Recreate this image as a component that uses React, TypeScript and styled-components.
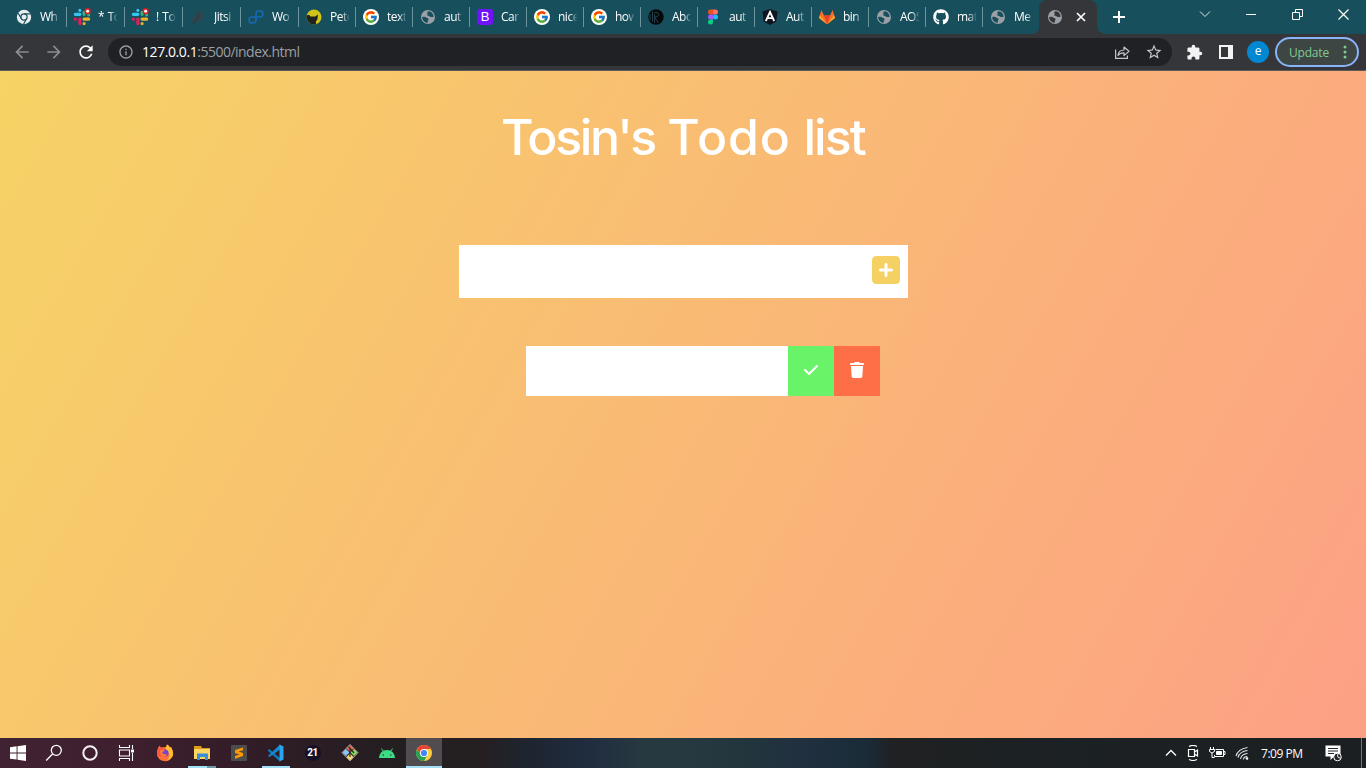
import React from "react";
import styled, { createGlobalStyle } from "styled-components";
import { FaCheck, FaSquarePlus, FaTrash } from "react-icons/fa6";
import { FaGithub } from "react-icons/fa";
import { FcGoogle } from "react-icons/fc";
import { MdExtension, MdRefresh, MdStarBorder, MdArrowBack, MdArrowForward, MdInfoOutline } from "react-icons/md";

const ui = `"Open Sans", "Noto Sans", sans-serif`;

const GlobalStyle = createGlobalStyle`
  * { box-sizing: border-box; }
  body { margin: 0; overflow: hidden; font-family: ${ui}; }
  svg { display: block; flex: none; }
  button { border: 0; padding: 0; margin: 0; font: inherit; }
`;

const Screen = styled.div`
  width: 1366px;
  height: 768px;
  display: flex;
  flex-direction: column;
`;

/* ---------- browser chrome ---------- */

const TabStrip = styled.div`
  height: 34px;
  flex: none;
  display: flex;
  padding-left: 9px;
  background: #184f5d;
`;

const Tab = styled.div<{ $wide?: boolean }>`
  width: ${(p) => (p.$wide ? 58 : 57)}px;
  height: 34px;
  padding-left: 7px;
  display: flex;
  align-items: center;
  flex: none;
  gap: 8px;
`;

const TabTitle = styled.span`
  width: 19px;
  margin-right: -8px;
  height: 18px;
  overflow: hidden;
  white-space: nowrap;
  color: #fff;
  font-size: 12px;
  line-height: 18px;
  letter-spacing: -0.5px;
  word-spacing: 1px;
  mask-image: linear-gradient(90deg, #000 60%, rgba(0, 0, 0, 0.1));
`;

const Separator = styled.i<{ $hidden?: boolean }>`
  width: 1px;
  height: 20px;
  margin-left: auto;
  background: ${(p) => (p.$hidden ? "transparent" : "#6d939c")};
`;

const ActiveTab = styled.div`
  width: 58px;
  margin-left: -1px;
  height: 34px;
  padding: 0 11px 0 8px;
  display: flex;
  flex: none;
  align-items: center;
  justify-content: space-between;
  background: #35363a;
  border-radius: 8px 8px 0 0;
`;

const Flare = styled.i<{ $side: "left" | "right" }>`
  width: 8px;
  height: 8px;
  flex: none;
  align-self: flex-end;
  margin-left: ${(p) => (p.$side === "left" ? -8 : 0)}px;
  background: radial-gradient(circle at ${(p) => (p.$side === "left" ? "0 0" : "100% 0")}, transparent 7.5px, #35363a 8px);
`;

const NewTab = styled.div`
  padding: 10px 0 0 7px;
`;

const WindowControls = styled.div`
  margin-left: auto;
  display: flex;
  height: 28px;
  align-items: center;
`;

const WindowButton = styled.div`
  width: 46px;
  display: flex;
  justify-content: center;
`;

const Toolbar = styled.div`
  height: 37px;
  flex: none;
  display: flex;
  align-items: center;
  background: #35363a;
  border-bottom: 1px solid #5b5a59;
`;

const NavButtons = styled.div`
  display: flex;
  width: 108px;
  padding-left: 12px;
  gap: 12px;
  color: #8b8c8f;
`;

const AddressBar = styled.div`
  width: 1064px;
  height: 28px;
  display: flex;
  align-items: center;
  padding: 0 9px 0 10px;
  border-radius: 14px;
  background: #202124;
  color: #9aa0a6;
`;

const Url = styled.div`
  margin-left: 8px;
  font-size: 14px;
  line-height: 20px;
  letter-spacing: -0.52px;
  flex: 1;
  b { color: #fff; font-weight: 400; letter-spacing: -0.42px; }
`;

const AddressActions = styled.div`
  display: flex;
  align-items: center;
  gap: 15px;
  color: #c4c6c9;
`;

const Extensions = styled.div`
  display: flex;
  align-items: center;
  padding-left: 14px;
  color: #f1f3f4;
`;

const PanelIcon = styled.i`
  width: 14px;
  height: 14px;
  margin-left: 16px;
  border: 2px solid #f1f3f4;
  border-right-width: 5px;
`;

const Avatar = styled.div`
  width: 22px;
  height: 22px;
  margin-left: 14px;
  border-radius: 50%;
  background: #0288d1;
  color: #fff;
  font-size: 12px;
  font-weight: 500;
  line-height: 20px;
  text-align: center;
`;

const UpdateButton = styled.button`
  width: 84px;
  height: 30px;
  margin-left: 6px;
  padding: 0 10px 0 12px;
  display: flex;
  align-items: center;
  justify-content: space-between;
  border: 2px solid #8ab4f8;
  border-radius: 15px;
  background: #3d4643;
  color: #81c995;
  font-size: 12px;
  letter-spacing: -0.2px;
`;

/* ---------- page ---------- */

const Page = styled.main`
  flex: 1;
  display: flex;
  flex-direction: column;
  align-items: center;
  background: linear-gradient(120deg, #f6d365 0%, #fda085 100%);
`;

const Title = styled.h1`
  margin: 30px 0 0;
  height: 72px;
  font-family: Inter, sans-serif;
  font-size: 50px;
  font-weight: 500;
  line-height: 72px;
  letter-spacing: -0.9px;
  white-space: nowrap;
  color: #fff;
`;

const Word = styled.span<{ $spacing: number }>`
  letter-spacing: ${(p) => p.$spacing}px;
`;

const TodoForm = styled.div`
  width: 449px;
  height: 53px;
  margin: 72px 0 0 1px;
  padding: 9px 6.5px 0 0;
  display: flex;
  justify-content: flex-end;
  background: #fff;
  color: #f5d063;
`;

const TodoItem = styled.div`
  display: flex;
  width: 354px;
  height: 50px;
  margin: 48px 0 0 40px;
  background: #fff;
`;

const TodoText = styled.div`
  flex: 1;
`;

const TodoAction = styled.button<{ $color: string }>`
  width: 46px;
  height: 50px;
  display: flex;
  align-items: center;
  justify-content: center;
  padding-bottom: 2px;
  color: #fff;
  background: ${(p) => p.$color};
`;

/* ---------- taskbar ---------- */

const Taskbar = styled.footer`
  height: 30px;
  flex: none;
  display: flex;
  color: #fff;
  background: linear-gradient(90deg, #412233 0, #3d1f2e 140px, #301c26 260px, #231f20 400px, #251f22 480px, #1e2530 530px, #202d40 590px, #263840 640px, #263940 690px, #22353d 750px, #203040 800px, #1a2b38 865px, #202122 895px, #1c2123 1000px, #1b1f21 1366px);
`;

const TaskSlot = styled.div<{ $w?: number; $active?: boolean }>`
  width: ${(p) => p.$w ?? 37}px;
  height: 30px;
  flex: none;
  display: flex;
  flex-direction: column;
  align-items: center;
  background: ${(p) => (p.$active ? "#504c50" : "transparent")};
`;

const TaskIcon = styled.div`
  flex: 1;
  display: flex;
  align-items: center;
  padding-top: 2px;
`;

const Indicator = styled.i<{ $full?: boolean; $split?: boolean; $on?: boolean }>`
  width: ${(p) => (p.$full ? "100%" : "28px")};
  height: 2px;
  background: ${(p) =>
    !p.$on ? "transparent" : p.$split ? "linear-gradient(90deg, #a2e0f8 19px, #6f99ab 19px)" : "#a2e0f8"};
`;

const Tray = styled.div`
  margin-left: auto;
  display: flex;
  align-items: center;
`;

const TrayIcons = styled.div`
  display: flex;
  align-items: center;
  svg + svg { margin-left: 9px; }
`;

const Clock = styled.span`
  width: 43px;
  margin: 0 21px 0 12px;
  font-size: 12px;
  letter-spacing: -0.45px;
  white-space: nowrap;
`;

const DesktopEdge = styled.i`
  width: 5px;
  height: 30px;
  margin-left: 19px;
  border-left: 1px solid #70777a;
`;

/* ---------- icons ---------- */

const Globe = ({ hole = "#184f5d" }: { hole?: string }) => (
  <svg width="16" height="16" viewBox="0 0 16 16">
    <circle cx="8" cy="8" r="7" fill="#9aa0a6" />
    <path d="M2.2 8.3C3.5 7.6 5.4 7.7 6.3 8.6c.8.8 2 .6 2.3 1.500.3.9-.9 1.300-.8 2.300l.1 1.400C4.700 13.800 2.200 11.400 2.200 8.300Z M8.800 2.300c-1.500.2-1.800 1.200-1.300 2 .5.7-.4 1.500-.1 2.100.5.8 1.900.2 2.600 1.100.5.700 1.700.8 3.700.2C13.500 4.800 11.600 2.600 8.800 2.300Z" fill={hole} />
  </svg>
);

const ChromeMono = () => (
  <svg width="16" height="16" viewBox="0 0 16 16">
    <circle cx="8" cy="8" r="7.200" fill="#e8eef0" />
    <circle cx="8" cy="8" r="3.100" fill="none" stroke="#184f5d" strokeWidth="1.200" />
    <path d="M8 4.900h6.300M5.300 9.500 2.200 4.200M10.700 9.500 7.600 15" stroke="#184f5d" strokeWidth="1.200" />
  </svg>
);

const SlackMark = styled.svg`
  margin: 0 -1px;
`;

const Slack = () => (
  <SlackMark width="18" height="18" viewBox="0 0 17 17">
    <g strokeWidth="3" strokeLinecap="round" fill="none">
      <path d="M6.500 6H2.200M6.500 2.200v.01" stroke="#36c5f0" />
      <path d="M10.500 4v2M14.800 6.500v.01" stroke="#2eb67d" />
      <path d="M10.500 10.500h4.300M10.500 14.700v.01" stroke="#ecb22e" />
      <path d="M6.500 10.500v4.300M2.200 10.500v.01" stroke="#e01e5a" />
    </g>
    <rect x="11" y=".3" width="5.600" height="5.600" rx="1.800" fill="#e01e25" />
    <circle cx="13.800" cy="3.100" r="1.400" fill="#fff" />
  </SlackMark>
);

const Feather = () => (
  <svg width="16" height="16" viewBox="0 0 16 16">
    <path d="M3 15C1.500 11 3 7.500 6 6l1-3 4-2.500-.5 4L13 5.500c1 4-2 6-5 7Z" fill="#32444b" />
    <path d="m3 15 6-9" stroke="#263a42" />
  </svg>
);

const Links = () => (
  <svg width="16" height="16" viewBox="0 0 16 16" fill="none" stroke="#1768b5" strokeWidth="1.500">
    <path d="M8 12V4.500Q8 2 10.500 2H12a2.700 2.700 0 0 1 0 6H5" />
    <path d="M8 8v3.500A2.800 2.800 0 0 1 5.200 14H4a2.800 2.800 0 0 1 0-6h1" />
  </svg>
);

const Wolf = () => (
  <svg width="16" height="16" viewBox="0 0 16 16">
    <circle cx="8" cy="8" r="7.500" fill="#cfc31c" />
    <path d="M.6 6.500 3 5.800 4.500 7.500h4.700L12 5.500l-.6 5-1.600 2 .4 2.700Q5 16.500 2 12.600.2 10 .6 6.500Z" fill="#20231f" />
  </svg>
);

const GoogleBadge = styled.span`
  width: 16px;
  height: 16px;
  flex: none;
  display: flex;
  align-items: center;
  justify-content: center;
  border-radius: 50%;
  background: #fff;
`;

const Bootstrap = styled.span`
  width: 16px;
  height: 16px;
  flex: none;
  border-radius: 3px;
  background: #6f13f8;
  color: #fff;
  font: 13px/16px "Liberation Sans", sans-serif;
  text-align: center;
`;

const DarkMark = () => (
  <svg width="16" height="16" viewBox="0 0 16 16">
    <circle cx="8" cy="8" r="7.700" fill="#05080a" />
    <path d="M4.500 2.500v10M6.500 3.500h3q3 2 0 4l-3 .5 4 6M6.500 5v9M2 5v6" stroke="#24404a" fill="none" />
  </svg>
);

const Figma = () => (
  <svg width="16" height="16" viewBox="0 0 16 16">
    <path d="M8 .5H5.500a2.500 2.500 0 0 0 0 5H8Z" fill="#f24e1e" />
    <path d="M8 .5h2.500a2.500 2.500 0 0 1 0 5H8Z" fill="#ff7262" />
    <path d="M8 5.500H5.500a2.500 2.500 0 0 0 0 5H8Z" fill="#a259ff" />
    <circle cx="10.500" cy="8" r="2.500" fill="#1abcfe" />
    <path d="M8 10.500H5.500A2.500 2.500 0 1 0 8 13Z" fill="#0acf83" />
  </svg>
);

const Angular = () => (
  <svg width="16" height="16" viewBox="0 0 16 16">
    <path d="m8 0 7.500 2.500-1.200 10L8 16l-6.300-3.500-1.200-10Z" fill="#11151f" />
    <path d="M3.800 12 8 3l4.200 9M5.500 9.200h5" stroke="#fff" strokeWidth="1.800" fill="none" />
  </svg>
);

const Gitlab = () => (
  <svg width="16" height="16" viewBox="0 0 16 16">
    <path d="M8 15.200 0 9l2.400-8L5 6.500h6L13.600 1 16 9Z" fill="#fc6d26" />
    <path d="M8 15.200 5 6.500h6Z" fill="#e24329" />
    <path d="M8 15.200 0 9l1-3ZM8 15.200 16 9l-1-3Z" fill="#fca326" />
  </svg>
);

const Share = () => (
  <svg width="16" height="16" viewBox="0 0 16 16" fill="none" stroke="currentColor" strokeWidth="1.200">
    <path d="M1.600 5.500v8.900h11.800v-3" />
    <path d="M4 11.500c.3-3.700 2.600-5.400 6-5.500V3l5 4.300-5 4.300V8.900c-2.500-.1-4.500.6-6 2.600Z" strokeLinejoin="round" />
  </svg>
);

const Firefox = () => (
  <svg width="18" height="18" viewBox="0 0 18 18">
    <path d="M2 4q1-2 2-2.500l.5 2L10 3 11 .5q2 1 3 3l1-.5q3 5 1.700 9Q14 17.500 9 17.300 1 16.500 1 9q0-3 1-5Z" fill="#ff7139" />
    <path d="M11 .5q2 1 3 3l1-.5q3 5 1.700 9-2 3.500-6 4.500 4-4 2-8-2-1-3-4Z" fill="#ffbd2f" />
    <path d="M2 5q2-2 5-1l2 2-3 1 4 2-1 4-5-1-2.500 1Q0 9 2 5Z" fill="#ff553e" />
    <circle cx="9" cy="9" r="3.500" fill="#7542d6" />
    <path d="M4 6q3-1 5 1L6 8q1 3 5 2-1 3-4 3-4-2-3-7Z" fill="#ff7838" />
  </svg>
);

const Explorer = () => (
  <svg width="18" height="18" viewBox="0 0 18 18">
    <path d="M1 2h7l1 2h8v4H1Z" fill="#dc9c17" />
    <path d="M1 5h16v10H1Z" fill="#ffd463" />
    <path d="M4 16V9.500h11V16h-3v-3H7v3Z" fill="#3590dc" />
  </svg>
);

const Sublime = () => (
  <svg width="16" height="16" viewBox="0 0 16 16">
    <rect width="16" height="16" rx="1" fill="#4c4c4c" />
    <path d="m4 5 8-2.500v2.700L7.500 6.600 12 8v3l-8 2.800v-2.700l4.500-1.500L4 8Z" fill="#ff9800" />
  </svg>
);

const Code = () => (
  <svg width="18" height="18" viewBox="0 0 18 18">
    <path d="m1 6 1.200-1L13 14v3.500L1 7Z" fill="#0879bf" />
    <path d="M1 12 13 .5 14 5 2.200 13Z" fill="#1688d1" />
    <path d="m12.500.5 4 2v13l-4 2Z" fill="#29a5ef" />
  </svg>
);

const Circle21 = styled.span`
  width: 16px;
  height: 16px;
  border-radius: 50%;
  background: #171128;
  font: 700 10px/16px Roboto, sans-serif;
  letter-spacing: -0.5px;
  text-align: center;
`;

const GitBash = () => (
  <svg width="18" height="18" viewBox="0 0 18 18">
    <path d="m9 1 3.500 3.500L9 8 5.500 4.500Z" fill="#ed6b50" />
    <path d="M5 5 8.500 8.500 5 12 1.500 8.500Z" fill="#86c5fb" />
    <path d="m13 5 3.500 3.500L13 12 9.500 8.500Z" fill="#89d95a" />
    <path d="m9 9.500 3.500 3.500L9 16.500 5.500 13Z" fill="#f9dc70" />
    <path d="m7 2 6 7M9 5v8" stroke="#302527" strokeWidth="1.200" />
    <path d="m9 .5 8 8.200-8 8.200-8-8.200Z" stroke="#e9e2dd" strokeWidth=".7" fill="none" />
  </svg>
);

const Android = () => (
  <svg width="18" height="18" viewBox="0 0 18 18">
    <path d="M5.500 7.500 3.500 4.500M12.500 7.500l2-3" stroke="#3ddc84" fill="none" />
    <path d="M1 14q1-8 8-8t8 8Z" fill="#3ddc84" />
    <circle cx="5.200" cy="11" r=".8" fill="#1d3a2b" />
    <circle cx="12.800" cy="11" r=".8" fill="#1d3a2b" />
  </svg>
);

const Chrome = () => (
  <svg width="16" height="16" viewBox="0 0 16 16">
    <circle cx="8" cy="8" r="8" fill="#ffcd40" />
    <path d="M8 0a8 8 0 0 1 6.930 4H8L4.500 10 1.070 4A8 8 0 0 1 8 0Z" fill="#ea4335" />
    <path d="M1.070 4 4.540 10 8 12 11.460 10 8 16A8 8 0 0 1 1.070 4Z" fill="#23a455" />
    <circle cx="8" cy="8" r="4" fill="#fff" />
    <circle cx="8" cy="8" r="3.100" fill="#4285f4" />
  </svg>
);

const WindowsLogo = () => (
  <svg width="16" height="16" viewBox="0 0 16 16" fill="#fff">
    <path d="M0 2.200 6.600 1.300v6.200H0ZM7.500 1.200 16 0v7.500H7.500ZM0 8.400h6.600v6.200L0 13.700ZM7.500 8.400H16V16l-8.500-1.200Z" />
  </svg>
);

const SearchIcon = () => (
  <svg width="18" height="18" viewBox="0 0 18 18" fill="none" stroke="#fff" strokeWidth="1.300">
    <circle cx="11.300" cy="6.300" r="5" />
    <path d="m7.500 10-6.300 6.500" />
  </svg>
);

const Cortana = () => (
  <svg width="16" height="16" viewBox="0 0 16 16">
    <circle cx="8" cy="8" r="6.700" fill="none" stroke="#f4f0f2" strokeWidth="2" />
  </svg>
);

const TaskView = () => (
  <svg width="17" height="16" viewBox="0 0 17 16" fill="none" stroke="#fff" strokeWidth="1.100">
    <path d="M1.500 0v2.500h10V0M1.500 16v-2.500h10V16M1.500 5h10v6h-10ZM14.500 0v4M14.500 8v8" />
    <path d="M13 4.500h3v3h-3Z" fill="#fff" stroke="none" />
  </svg>
);

const Camera = () => (
  <svg width="14" height="16" viewBox="0 0 14 16" fill="none" stroke="#fff" strokeWidth="1.200">
    <path d="M3 1.500q4-2 8 0M3 14.500q4 2 8 0M2.500 4.500h6v7h-6ZM8.500 7 11.500 5v6l-3-2" />
  </svg>
);

const Battery = () => (
  <svg width="17" height="14" viewBox="0 0 17 14" fill="none" stroke="#fff">
    <path d="M6.500 3.500h8v7h-9V9M15 5.500h1v3h-1M1.500 1v2M4.500 1v2M3 7v4.500h2.500" />
    <path d="M.5 3.500h5v2q-2.500 3-5 0Z" />
    <path d="M7.500 5.500h5v3h-5Z" fill="#fff" />
  </svg>
);

const Wifi = () => (
  <svg width="14" height="14" viewBox="0 0 14 14" fill="none" stroke="#e5e7e8" strokeWidth="1.100">
    <path d="M1 10Q3 3 12.500 1.500M3 11.500Q4.500 5.500 12.500 4.500M5.500 13Q6.500 8 12.500 7.500M8.300 13.500q.5-3 4-3" />
    <circle cx="12" cy="12.500" r="1.300" fill="#fff" stroke="none" />
  </svg>
);

const Notification = () => (
  <svg width="17" height="17" viewBox="0 0 17 17">
    <path d="M.5.5h15v11H9L5.500 15v-3.500h-5Z" fill="#fff" />
    <path d="M3 3.500h10M3 6h10M3 8.500h6" stroke="#222729" />
    <circle cx="12.500" cy="12" r="3.800" fill="#222729" stroke="#fff" />
    <path d="M13 9q-1.500 4 2.500 4" fill="none" stroke="#fff" />
  </svg>
);

const googleIcon = (
  <GoogleBadge>
    <FcGoogle size={14} />
  </GoogleBadge>
);

const tabs: [React.ReactNode, string][] = [
  [<ChromeMono />, "Wh"],
  [<Slack />, "* To"],
  [<Slack />, "! To"],
  [<Feather />, "Jitsi"],
  [<Links />, "Wo"],
  [<Wolf />, "Pete"],
  [googleIcon, "text"],
  [<Globe />, "aut"],
  [<Bootstrap>B</Bootstrap>, "Car"],
  [googleIcon, "nice"],
  [googleIcon, "how"],
  [<DarkMark />, "Abo"],
  [<Figma />, "aut"],
  [<Angular />, "Aut"],
  [<Gitlab />, "bin"],
  [<Globe />, "AOS"],
  [<FaGithub size={16} color="#fff" />, "mat"],
  [<Globe />, "Me"],
];

type TaskEntry = { icon: React.ReactNode; w?: number; active?: boolean; open?: boolean; split?: boolean };

const tasks: TaskEntry[] = [
  { icon: <WindowsLogo />, w: 36 },
  { icon: <SearchIcon />, w: 36 },
  { icon: <Cortana />, w: 36 },
  { icon: <TaskView />, w: 36 },
  { icon: <Firefox />, w: 42 },
  { icon: <Explorer />, w: 32, open: true, split: true },
  { icon: <Sublime />, w: 42 },
  { icon: <Code />, w: 32, open: true },
  { icon: <Circle21>21</Circle21>, w: 41 },
  { icon: <GitBash />, w: 34 },
  { icon: <Android />, w: 39 },
  { icon: <Chrome />, w: 36, active: true, open: true },
];

export default function App() {
  return (
    <Screen>
      <GlobalStyle />
      <TabStrip>
        {tabs.map(([icon, title], i) => (
          <Tab key={i} $wide={i < 5}>
            {icon}
            <TabTitle>{title}</TabTitle>
            <Separator $hidden={i === tabs.length - 1} />
          </Tab>
        ))}
        <Flare $side="left" />
        <ActiveTab>
          <Globe hole="#35363a" />
          <svg width="10" height="10" viewBox="0 0 10 10" stroke="#fff" strokeWidth="1.700">
            <path d="m1 1 8 8M9 1 1 9" />
          </svg>
        </ActiveTab>
        <Flare $side="right" />
        <NewTab>
          <svg width="14" height="14" viewBox="0 0 14 14" stroke="#fff" strokeWidth="2">
            <path d="M7 1v12M1 7h12" />
          </svg>
        </NewTab>
        <WindowControls>
          <WindowButton>
            <svg width="12" height="12" viewBox="0 0 12 12" fill="none" stroke="#dfe8ea">
              <path d="m1 3.500 5 5 5-5" />
            </svg>
          </WindowButton>
          <WindowButton>
            <svg width="10" height="10" viewBox="0 0 10 10" stroke="#fff">
              <path d="M0 5.500h10" />
            </svg>
          </WindowButton>
          <WindowButton>
            <svg width="11" height="11" viewBox="0 0 11 11" fill="none" stroke="#fff">
              <path d="M.5 3.500h7v7h-7ZM3.500 3V.5h7v7H8" />
            </svg>
          </WindowButton>
          <WindowButton>
            <svg width="11" height="11" viewBox="0 0 11 11" stroke="#fff" strokeWidth="1.200">
              <path d="m.5.5 10 10M10.500.5l-10 10" />
            </svg>
          </WindowButton>
        </WindowControls>
      </TabStrip>

      <Toolbar>
        <NavButtons>
          <MdArrowBack size={20} />
          <MdArrowForward size={20} />
          <MdRefresh size={20} color="#fff" />
        </NavButtons>
        <AddressBar>
          <MdInfoOutline size={16} />
          <Url>
            <b>127.0.0.1</b>:5500/index.html
          </Url>
          <AddressActions>
            <Share />
            <MdStarBorder size={18} />
          </AddressActions>
        </AddressBar>
        <Extensions>
          <MdExtension size={17} />
          <PanelIcon />
          <Avatar>e</Avatar>
          <UpdateButton>
            Update
            <svg width="4" height="14" viewBox="0 0 4 14" fill="#81c995">
              <circle cx="2" cy="2" r="1.500" />
              <circle cx="2" cy="7" r="1.500" />
              <circle cx="2" cy="12" r="1.500" />
            </svg>
          </UpdateButton>
        </Extensions>
      </Toolbar>

      <Page>
        <Title>
          <Word $spacing={-2.4}>Tosin's</Word> <Word $spacing={0.9}>Todo</Word> <Word $spacing={-1.9}>list</Word>
        </Title>
        <TodoForm>
          <FaSquarePlus size={32} />
        </TodoForm>
        <TodoItem>
          <TodoText />
          <TodoAction $color="#69f368">
            <FaCheck size={16} />
          </TodoAction>
          <TodoAction $color="#ff6f47">
            <FaTrash size={16} />
          </TodoAction>
        </TodoItem>
      </Page>

      <Taskbar>
        {tasks.map((t, i) => (
          <TaskSlot key={i} $w={t.w} $active={t.active}>
            <TaskIcon>{t.icon}</TaskIcon>
            <Indicator $on={t.open} $split={t.split} $full={t.active} />
          </TaskSlot>
        ))}
        <Tray>
          <TrayIcons>
            <svg width="12" height="8" viewBox="0 0 12 8" fill="none" stroke="#fff" strokeWidth="1.300">
              <path d="m1 6.500 5-5 5 5" />
            </svg>
            <Camera />
            <Battery />
            <Wifi />
          </TrayIcons>
          <Clock>7:09 PM</Clock>
          <Notification />
          <DesktopEdge />
        </Tray>
      </Taskbar>
    </Screen>
  );
}
